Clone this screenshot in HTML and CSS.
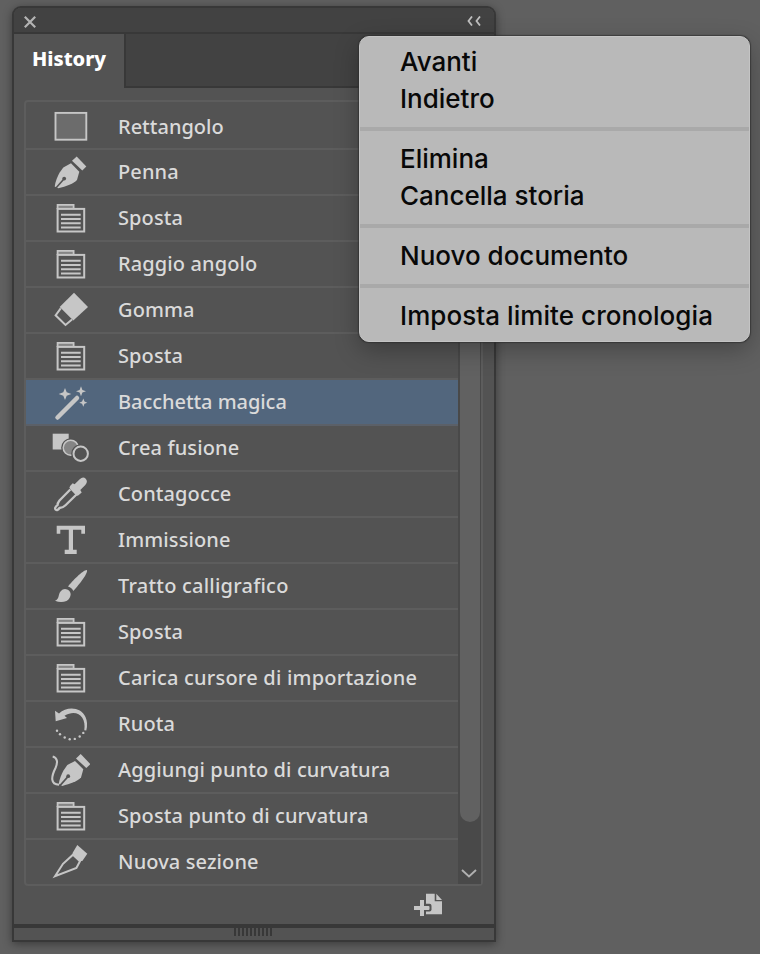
FILE: index.html
```html
<!DOCTYPE html>
<html lang="it">
<head>
<meta charset="utf-8">
<title>History</title>
<link rel="stylesheet" href="styles.css">
</head>
<body>
<svg class="defs" width="0" height="0">
  <symbol id="rect" viewBox="0 0 40 40"><rect x="5.500" y="6.900" width="30.800" height="26.800" fill="#6c6c6c" stroke="currentColor" stroke-width="1.900"/></symbol>
  <symbol id="nib" viewBox="0 0 40 40">
    <path d="M4.700 34.500 C5.500 29 7.500 24.500 9.500 20.800 L13.300 15.500 L21 11.300 L29.300 19.700 L27 28 C24 31.500 16 34.500 8.300 36.300Z" fill="currentColor"/>
    <path d="M5.500 36.500 L13.500 27.500" stroke="#535353" stroke-width="1.600"/>
    <circle cx="14.200" cy="26.600" r="1.900" fill="#535353"/>
    <path d="M26.700 4.500 L36.300 14.500 L32.300 18.500 L22 8.800Z" fill="currentColor"/>
  </symbol>
  <symbol id="doc" viewBox="0 0 40 40">
    <path d="M7.600 11 V6.800 H23.600 V11" fill="#858585" stroke="currentColor" stroke-width="1.800"/>
    <rect x="7.600" y="10.900" width="26.600" height="22.600" fill="none" stroke="currentColor" stroke-width="2"/>
    <path d="M11 16.800H30.700M11 21H30.700M11 25.200H30.700M11 29.400H30.700" stroke="currentColor" stroke-width="2"/>
  </symbol>
  <symbol id="eraser" viewBox="0 0 40 40">
    <path d="M24 2.700 L38 17 L23.300 30.500 L9.700 17Z" fill="currentColor"/>
    <path d="M10.700 18.300 L5.600 25.300 L15.500 35 L22 29.500" fill="none" stroke="currentColor" stroke-width="2"/>
  </symbol>
  <symbol id="wand" viewBox="0 0 40 40" fill="currentColor">
    <path d="M7.500 35.500 L27 16" stroke="currentColor" stroke-width="4.500" stroke-linecap="round"/>
    <path d="M15 6 L16.700 10.300 L21.300 12 L16.700 13.700 L15 18 L13.300 13.700 L8.700 12 L13.300 10.300Z"/>
    <path d="M31 4.200 L32.400 7.900 L36 9.300 L32.400 10.600 L31 14.200 L29.600 10.600 L26 9.300 L29.600 7.900Z"/>
    <path d="M33.300 16.600 L34.500 19.600 L37.300 20.700 L34.500 21.800 L33.300 24.800 L32.100 21.800 L29.300 20.700 L32.100 19.600Z"/>
  </symbol>
  <symbol id="blend" viewBox="0 0 40 40">
    <rect x="2.700" y="5.700" width="16" height="15.800" fill="currentColor"/>
    <circle cx="20.700" cy="19.700" r="9.500" fill="#535353"/>
    <circle cx="20.700" cy="19.700" r="7.500" fill="#858585" stroke="currentColor" stroke-width="1.500"/>
    <circle cx="30.700" cy="25.700" r="9.500" fill="#535353"/>
    <circle cx="30.700" cy="25.700" r="7.200" fill="none" stroke="currentColor" stroke-width="2"/>
  </symbol>
  <symbol id="dropper" viewBox="0 0 40 40">
    <path d="M20.300 15.500 L9.500 26.500 Q7.500 29 7.500 31.200 Q4 34 5.700 35.600 Q7.500 37 9.500 34 Q13 33.800 15.500 31.300 L26.500 20.500" fill="none" stroke="currentColor" stroke-width="2.300"/>
    <path d="M20.300 11.700 L22.700 9.200 L24.600 10.200 L29.700 5.200 Q33 2.200 35.700 4.700 Q38.300 7.500 35.300 11 L30.300 16 L31.700 18.400 L28.500 21.300Q27 22.300 25.500 20.700 L20.300 15.300 Q18.500 13.500 20.300 11.700Z" fill="currentColor"/>
  </symbol>
  <symbol id="type" viewBox="0 0 40 40"><path d="M6.700 5.700 H35 V13.700 H31.300 V9.700 H23 V29.700 H26.700 V34 H14.700 V29.700 H18.800 V9.700 H10.300 V13.700 H6.700Z" fill="currentColor"/></symbol>
  <symbol id="brush" viewBox="0 0 40 40" fill="currentColor">
    <path d="M36.900 4 C38.500 6.500 30 18 23.300 25 Q22 21.700 18 20.500 C22 15.500 33 3.800 36.900 4Z"/>
    <path d="M5 34.800 Q8.300 33.500 8.800 29.500 Q10 23.500 15 23 Q20 23.500 20.700 28 Q20.500 32.500 16.500 35 Q11 37.300 5 34.800Z"/>
  </symbol>
  <symbol id="rotate" viewBox="0 0 40 40" fill="currentColor">
    <path d="M5 6.700 L9 9.600 C17 2 31 3 35.500 13 Q38.200 19 36.300 26.500 L34.300 26.200 C36.500 13 27 4.500 14.500 11.800 L17 14 L5.700 17.300Z"/>
    <circle cx="7" cy="26.700" r="1.200"/><circle cx="10" cy="30.300" r="1.200"/><circle cx="14.700" cy="33.500" r="1.200"/><circle cx="19.700" cy="35.200" r="1.200"/><circle cx="24.800" cy="34.900" r="1.200"/><circle cx="29.700" cy="32.500" r="1.200"/><circle cx="33.300" cy="28.900" r="1.200"/>
  </symbol>
  <symbol id="curve" viewBox="0 0 40 40">
    <use href="#nib" x="4" y="-.4" width="40" height="40"/>
    <path d="M2.700 6.500 C8 8 7.700 13 5.500 18 C1 27 .3 34.500 9 34.700" fill="none" stroke="currentColor" stroke-width="2.100"/>
  </symbol>
  <symbol id="blade" viewBox="0 0 40 40">
    <path d="M5 34.300 L13 21.800 L23 12.700 L30 19.300 L26.400 26 Z" fill="none" stroke="currentColor" stroke-width="2"/>
    <path d="M27.300 3 L37.300 11.700 L32.300 18.900 L29.500 19 L22.700 12.500 V10.800Z" fill="currentColor"/>
  </symbol>
</svg>
<main class="panel">
  <header class="titlebar">
    <svg class="close" viewBox="0 0 12 12"><path d="M.8 .8L11.200 11.200M11.200 .8L.8 11.200"/></svg>
    <svg class="collapse" viewBox="0 0 14 10"><path d="M5 .5L1.500 5L5 9.500M13 .5L9.500 5L13 9.500"/></svg>
  </header>
  <nav class="tabs"><div class="tab">History</div><div class="tab-rest"></div></nav>
  <section class="list">
    <ul class="rows">
      <li><svg><use href="#rect"/></svg><span>Rettangolo</span></li>
      <li><svg><use href="#nib"/></svg><span>Penna</span></li>
      <li><svg><use href="#doc"/></svg><span>Sposta</span></li>
      <li><svg><use href="#doc"/></svg><span>Raggio angolo</span></li>
      <li><svg><use href="#eraser"/></svg><span>Gomma</span></li>
      <li><svg><use href="#doc"/></svg><span>Sposta</span></li>
      <li class="selected"><svg><use href="#wand"/></svg><span>Bacchetta magica</span></li>
      <li><svg><use href="#blend"/></svg><span>Crea fusione</span></li>
      <li><svg><use href="#dropper"/></svg><span>Contagocce</span></li>
      <li><svg><use href="#type"/></svg><span>Immissione</span></li>
      <li class="wide"><svg><use href="#brush"/></svg><span>Tratto calligrafico</span></li>
      <li><svg><use href="#doc"/></svg><span>Sposta</span></li>
      <li class="wide"><svg><use href="#doc"/></svg><span>Carica cursore di importazione</span></li>
      <li><svg><use href="#rotate"/></svg><span>Ruota</span></li>
      <li><svg><use href="#curve"/></svg><span>Aggiungi punto di curvatura</span></li>
      <li><svg><use href="#doc"/></svg><span>Sposta punto di curvatura</span></li>
      <li><svg><use href="#blade"/></svg><span>Nuova sezione</span></li>
    </ul>
    <div class="scrollbar">
      <div class="thumb"></div>
      <svg class="down" viewBox="0 0 16 9"><path d="M1 1L8 7.500L15 1"/></svg>
    </div>
  </section>
  <div class="actions">
    <svg class="new-doc" viewBox="0 0 28 23">
      <path d="M12 .7H20.700V8.300H28V21.300H12Z M22.300 .7L28 6.900H22.300Z" fill="#c6c6c6"/>
      <path d="M10.500 10.800H15.500Q17.500 10.800 17.500 12.800V16.600Q17.500 18.600 15.500 18.600H10.500Z" fill="#535353"/>
      <path d="M6 7H10V13H14.500Q15.500 13 15.500 14V16Q15.500 17 14.500 17H10V23H6V17H0V13H6Z" fill="#c6c6c6"/>
    </svg>
  </div>
  <footer class="grip-bar"><div class="grip"></div></footer>
</main>
<div class="menu" role="menu">
  <div class="group"><div>Avanti</div><div>Indietro</div></div>
  <div class="group"><div>Elimina</div><div>Cancella storia</div></div>
  <div class="group"><div>Nuovo documento</div></div>
  <div class="group"><div class="long">Imposta limite cronologia</div></div>
</div>
</body>
</html>
```
FILE: styles.css
```css
* { box-sizing: border-box; }
html, body { margin: 0; height: 100%; }
body {
  position: relative;
  overflow: hidden;
  padding: 6px 0 0 12px;
  background: #606060;
  font-family: "Noto Sans", "Open Sans", sans-serif;
}
.defs { position: absolute; }
.panel {
  display: flex;
  flex-direction: column;
  width: 484px;
  height: 936px;
  border: 2px solid #383838;
  border-radius: 9px 9px 0 0;
  background: #535353;
  box-shadow: 0 2px 10px rgba(0, 0, 0, .4);
}
.titlebar {
  display: flex;
  justify-content: space-between;
  align-items: center;
  height: 26px;
  padding: 1px 13px 0 10px;
  border-bottom: 2px solid #383838;
  border-radius: 7px 7px 0 0;
  background: #424242;
}
.titlebar svg { fill: none; stroke: #c0c0c0; stroke-width: 1.8; }
.close { width: 12px; height: 12px; margin-top: 3px; }
.titlebar .close { stroke-width: 2.2; stroke: #b4b4b4; }
.collapse { width: 14px; height: 10px; }
.tabs { display: flex; height: 54px; }
.tab {
  width: 110px;
  padding: 11px 0 0 18px;
  color: #fff;
  font-size: 20px;
  font-weight: 800;
  line-height: 28px;
}
.tab-rest {
  flex: 1;
  border-left: 2px solid #383838;
  border-bottom: 2px solid #383838;
  background: #424242;
}
.list {
  display: flex;
  height: 786px;
  margin: 12px 11px 0 10px;
  border: 2px solid #5d5d5d;
  border-radius: 4px;
}
.rows { flex: 1; margin: 0; padding: 0; list-style: none; }
.rows li {
  display: flex;
  align-items: center;
  height: 46px;
  padding-left: 24px;
  border-bottom: 2px solid #5d5d5d;
  color: #dadada;
  font-size: 20px;
  font-weight: 500;
  letter-spacing: .11px;
  white-space: nowrap;
}
.rows li.wide { letter-spacing: .22px; }
.rows li.selected { letter-spacing: -.05px; }
.rows span { margin-top: -1px; }
.rows li:first-child { height: 48px; padding-top: 2px; letter-spacing: 0; }
.rows li:first-child span { margin-top: 1px; }
.rows li:last-child { height: 44px; border-bottom: 0; }
.rows .selected { background: #52667d; border-color: #5b6068; }
.rows svg { width: 40px; height: 40px; margin-right: 28px; color: #c6c6c6; overflow: visible; }
.scrollbar {
  display: flex;
  flex-direction: column;
  justify-content: space-between;
  align-items: center;
  width: 23px;
  background: #494949;
}
.thumb { width: 20px; height: 720px; border-radius: 0 0 10px 10px; background: #616161; }
.down { width: 16px; height: 9px; margin: 0 2px 6px 0; fill: none; stroke: #b0b0b0; stroke-width: 1.9; }
.actions { display: flex; flex: 1; padding: 7px 0 0 400px; }
.new-doc { width: 28px; height: 23px; }
.grip-bar {
  display: flex;
  justify-content: center;
  height: 16px;
  border-top: 4px solid #383838;
}
.grip {
  width: 38px;
  height: 8px;
  margin-right: 2px;
  background: repeating-linear-gradient(90deg, #383838 0 2px, transparent 2px 4px);
}
.menu {
  position: absolute;
  left: 359px;
  top: 36px;
  width: 391px;
  height: 306px;
  padding-top: 6px;
  border: 1px solid #c4c4c4;
  border-radius: 10px;
  background: #b9b9b9;
  box-shadow: 0 0 1px 1px rgba(45, 45, 45, .65), 0 8px 24px rgba(0, 0, 0, .28);
  color: #080808;
  font: 450 26px/37px Inter, "Liberation Sans", sans-serif;
}
.group { padding-left: 40px; }
.group + .group { margin-top: 10px; padding-top: 9px; border-top: 4px solid #a9a9a9; }
.group + .group > div { position: relative; top: -.5px; }
.long { letter-spacing: .06px; }
```
